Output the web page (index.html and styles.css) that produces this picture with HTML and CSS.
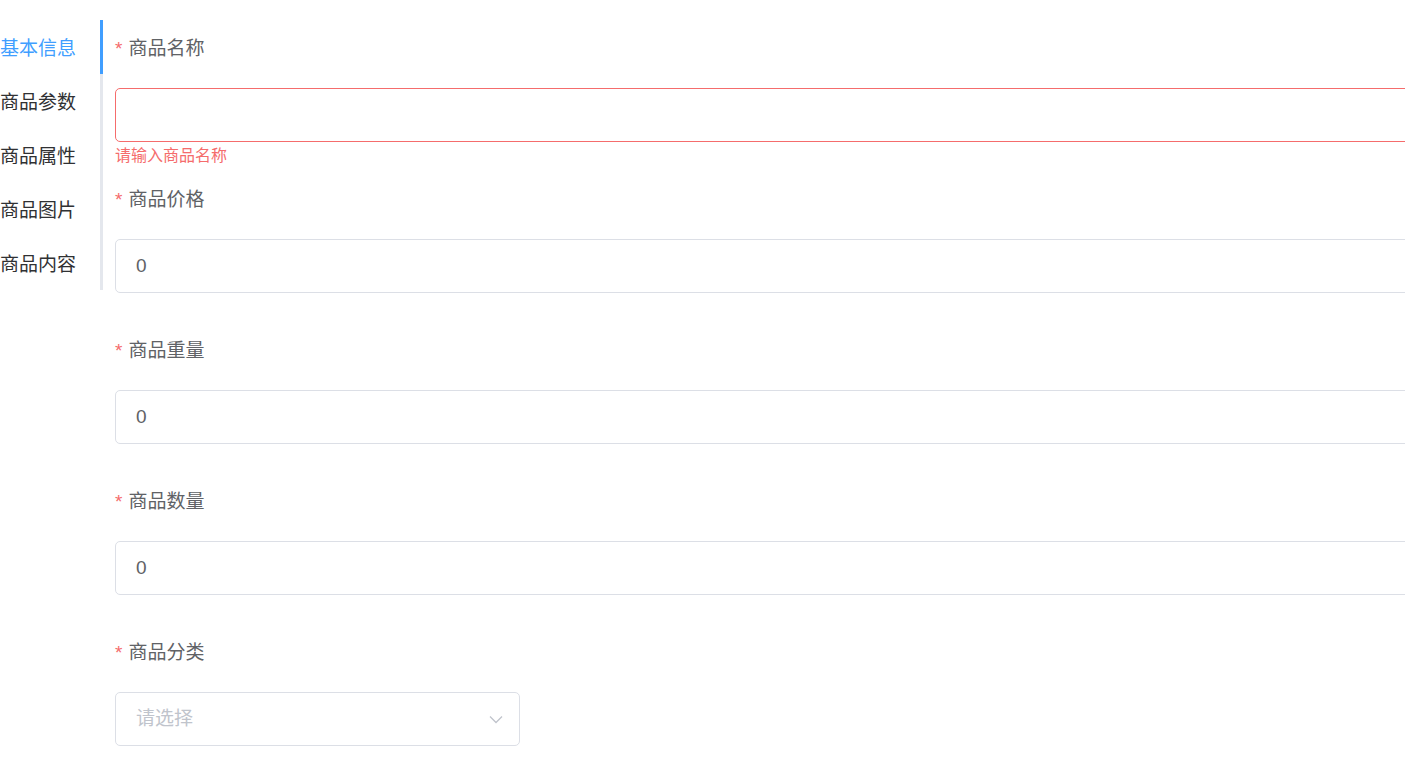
FILE: index.html
```html
<!DOCTYPE html>
<html lang="zh-CN">
<head>
<meta charset="utf-8">
<title>商品信息</title>
<link rel="stylesheet" href="styles.css">
</head>
<body>
<div class="page">
  <nav class="tabs">
    <div class="tab is-active">基本信息</div>
    <div class="tab">商品参数</div>
    <div class="tab">商品属性</div>
    <div class="tab">商品图片</div>
    <div class="tab">商品内容</div>
  </nav>
  <form class="form">
    <div class="form-item has-error">
      <label class="label required">商品名称</label>
      <div class="input is-error"></div>
      <div class="error">请输入商品名称</div>
    </div>
    <div class="form-item">
      <label class="label required">商品价格</label>
      <div class="input">0</div>
    </div>
    <div class="form-item">
      <label class="label required">商品重量</label>
      <div class="input">0</div>
    </div>
    <div class="form-item">
      <label class="label required">商品数量</label>
      <div class="input">0</div>
    </div>
    <div class="form-item">
      <label class="label required">商品分类</label>
      <div class="input select">
        <span class="placeholder">请选择</span>
        <svg class="arrow" width="14" height="14" viewBox="0 0 14 14"><path d="M1 4.5 L7 10.5 L13 4.5" fill="none" stroke="#c0c4cc" stroke-width="1.3"/></svg>
      </div>
    </div>
  </form>
</div>
</body>
</html>
```
FILE: styles.css
```css
html, body {
  margin: 0;
  padding: 0;
  background: #fff;
  overflow: hidden;
}
body {
  font-family: "Liberation Sans", "Noto Sans CJK SC", sans-serif;
  width: 1405px;
  height: 772px;
}
.page {
  display: flex;
  align-items: flex-start;
  padding-top: 20px;
}
.tabs {
  flex: none;
  display: flex;
  flex-direction: column;
}
.tab {
  width: 103px;
  box-sizing: border-box;
  height: 54px;
  padding-top: 4px;
  line-height: 50px;
  padding-right: 24px;
  text-align: right;
  font-size: 19px;
  color: #303133;
  border-right: 3px solid #e4e7ed;
  white-space: nowrap;
}
.tab.is-active {
  color: #409eff;
  border-right-color: #409eff;
}
.form {
  flex: none;
  margin-left: 12px;
  width: 1600px;
  display: flex;
  flex-direction: column;
}
.form-item {
  display: flex;
  flex-direction: column;
  margin-bottom: 29px;
}
.form-item.has-error {
  margin-bottom: 7px;
}
.label {
  height: 50px;
  padding-top: 4px;
  line-height: 50px;
  padding-bottom: 14px;
  font-size: 19px;
  color: #606266;
}
.label.required::before {
  content: "*";
  color: #f56c6c;
  margin-right: 6px;
}
.input {
  box-sizing: border-box;
  height: 54px;
  border: 1px solid #dcdfe6;
  border-radius: 5px;
  padding: 0 20px;
  line-height: 52px;
  font-size: 19px;
  color: #606266;
}
.input.is-error {
  border-color: #f56c6c;
}
.error {
  padding-top: 6px;
  height: 16px;
  line-height: 16px;
  font-size: 16px;
  color: #f56c6c;
}
.select {
  width: 405px;
  display: flex;
  align-items: center;
  justify-content: space-between;
  padding-right: 16px;
}
.placeholder {
  color: #c0c4cc;
}
.arrow {
  display: block;
}
```
